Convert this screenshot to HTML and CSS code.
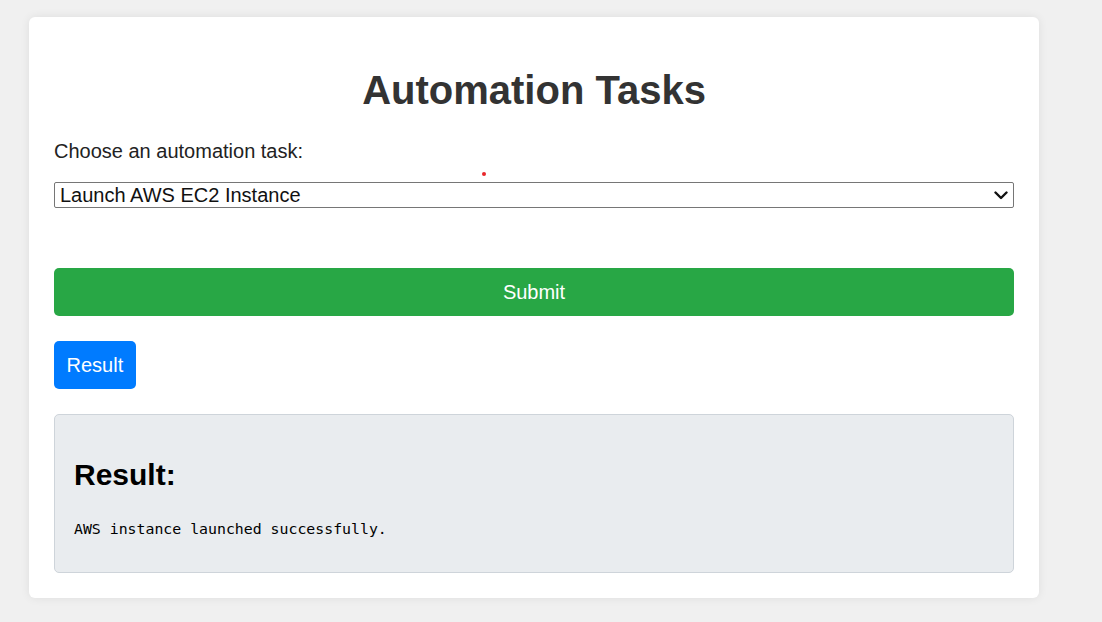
FILE: index.html
```html
<!DOCTYPE html>
<html lang="en">
<head>
<meta charset="utf-8">
<title>Automation Tasks</title>
<link rel="stylesheet" href="styles.css">
</head>
<body>
<div class="card">
  <span class="dot"></span>
  <h1 class="title">Automation Tasks</h1>
  <form class="task-form">
    <label class="label" for="task">Choose an automation task:</label>
    <div class="select-wrap">
      <select id="task" class="select">
        <option>Launch AWS EC2 Instance</option>
      </select>
      <svg class="chevron" width="14" height="9" viewBox="0 0 14 9"><path d="M1.5 1.5 L7 7 L12.5 1.5" fill="none" stroke="#111" stroke-width="2.4" stroke-linecap="round" stroke-linejoin="round"/></svg>
    </div>
    <button type="button" class="btn btn-submit">Submit</button>
  </form>
  <button type="button" class="btn btn-result">Result</button>
  <div class="result-box">
    <h2 class="result-title">Result:</h2>
    <pre class="result-text">AWS instance launched successfully.</pre>
  </div>
</div>
</body>
</html>
```
FILE: styles.css
```css
html, body {
  margin: 0;
  background: #f0f0f0;
}
body {
  padding: 17px 0 24px 29px;
  font-family: "Liberation Sans", Arial, sans-serif;
}
.card {
  position: relative;
  box-sizing: border-box;
  width: 1010px;
  background: #fff;
  border-radius: 6px;
  box-shadow: 0 0 10px rgba(0, 0, 0, 0.08);
  padding: 25px;
}
.dot {
  position: absolute;
  left: 453px;
  top: 155px;
  width: 4px;
  height: 4px;
  border-radius: 50%;
  background: #e8262b;
}
.title {
  margin: 25px 0 27px;
  text-align: center;
  font-size: 40px;
  font-weight: bold;
  color: #333;
  line-height: 46px;
}
.task-form {
  display: flex;
  flex-direction: column;
}
.label {
  display: block;
  font-size: 20px;
  line-height: 23px;
  color: #222;
  margin-bottom: 19px;
}
.select-wrap {
  position: relative;
  margin-bottom: 60px;
}
.select {
  display: block;
  box-sizing: border-box;
  width: 100%;
  height: 26px;
  margin: 0;
  padding: 0 30px 0 5px;
  border: 1px solid #767676;
  border-radius: 2px;
  background: #fff;
  -webkit-appearance: none;
  appearance: none;
  font-family: "Liberation Sans", Arial, sans-serif;
  font-size: 20px;
  color: #111;
}
.chevron {
  position: absolute;
  right: 6px;
  top: 9px;
  pointer-events: none;
}
.btn {
  box-sizing: border-box;
  height: 48px;
  border: none;
  border-radius: 5px;
  color: #fff;
  font-family: "Liberation Sans", Arial, sans-serif;
  font-size: 20px;
  line-height: 23px;
  cursor: pointer;
}
.btn-submit {
  width: 100%;
  background: #28a745;
  margin-bottom: 25px;
}
.btn-result {
  display: block;
  padding: 0 12.5px;
  background: #007bff;
  margin-bottom: 25px;
}
.result-box {
  box-sizing: border-box;
  background: #e9ecef;
  border: 1px solid #ced4da;
  border-radius: 5px;
  padding: 1px 19px 19px;
}
.result-title {
  margin: 42px 0 29px;
  font-size: 30px;
  line-height: 34px;
  font-weight: bold;
  color: #000;
}
.result-text {
  margin: 0 0 15px;
  font-family: "DejaVu Sans Mono", "Liberation Mono", monospace;
  font-size: 14.85px;
  line-height: 17px;
  color: #000;
}
```
